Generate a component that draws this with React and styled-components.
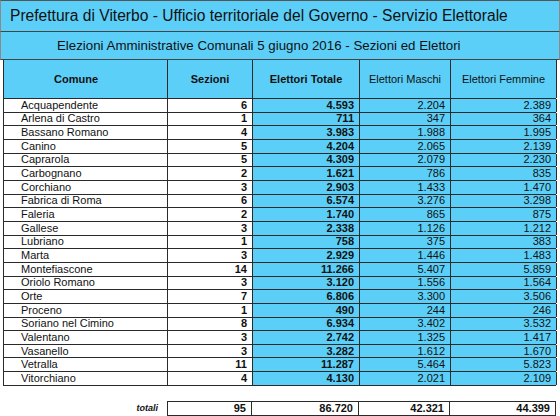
import React from 'react';
import styled, { createGlobalStyle } from 'styled-components';

const rows = [
  ['Acquapendente', '6', '4.593', '2.204', '2.389'],
  ['Arlena di Castro', '1', '711', '347', '364'],
  ['Bassano Romano', '4', '3.983', '1.988', '1.995'],
  ['Canino', '5', '4.204', '2.065', '2.139'],
  ['Caprarola', '5', '4.309', '2.079', '2.230'],
  ['Carbognano', '2', '1.621', '786', '835'],
  ['Corchiano', '3', '2.903', '1.433', '1.470'],
  ['Fabrica di Roma', '6', '6.574', '3.276', '3.298'],
  ['Faleria', '2', '1.740', '865', '875'],
  ['Gallese', '3', '2.338', '1.126', '1.212'],
  ['Lubriano', '1', '758', '375', '383'],
  ['Marta', '3', '2.929', '1.446', '1.483'],
  ['Montefiascone', '14', '11.266', '5.407', '5.859'],
  ['Oriolo Romano', '3', '3.120', '1.556', '1.564'],
  ['Orte', '7', '6.806', '3.300', '3.506'],
  ['Proceno', '1', '490', '244', '246'],
  ['Soriano nel Cimino', '8', '6.934', '3.402', '3.532'],
  ['Valentano', '3', '2.742', '1.325', '1.417'],
  ['Vasanello', '3', '3.282', '1.612', '1.670'],
  ['Vetralla', '11', '11.287', '5.464', '5.823'],
  ['Vitorchiano', '4', '4.130', '2.021', '2.109'],
];

const BLUE = '#5ccff8';
const LINE = '#2a2a2a';
const COLS = '164px 85px 107px 91px 106px';

const GlobalStyle = createGlobalStyle`
  body {
    margin: 0;
    background: #fff;
    font-family: "Liberation Sans", Arial, sans-serif;
    color: #111;
  }
`;

const Page = styled.div`
  width: 560px;
  height: 416px;
  overflow: hidden;
`;

const Band = styled.div`
  box-sizing: border-box;
  height: ${({ h }) => h}px;
  display: flex;
  align-items: center;
  padding-left: ${({ pad }) => pad}px;
  background: ${BLUE};
  border-left: 1px solid #8a8a8a;
  border-right: 1px solid #8a8a8a;
  border-top: ${({ top }) => (top ? `1px solid #555` : 'none')};
  border-bottom: 1px solid #444;
  font-size: ${({ size }) => size}px;
  white-space: nowrap;
`;

const Table = styled.div`
  margin-left: 3px;
  width: 553px;
`;

const Row = styled.div`
  box-sizing: border-box;
  display: grid;
  grid-template-columns: ${COLS};
  height: ${({ h }) => h}px;
  border-left: 1px solid ${LINE};
  border-bottom: 1px solid ${LINE};
`;

const HeadCell = styled.div`
  display: flex;
  align-items: center;
  justify-content: center;
  padding-right: ${({ shift }) => shift || 0}px;
  background: ${BLUE};
  border-right: 1px solid ${LINE};
  font-size: 11px;
  font-weight: ${({ bold }) => (bold ? 700 : 400)};
`;

const Cell = styled.div`
  display: flex;
  align-items: center;
  justify-content: ${({ left }) => (left ? 'flex-start' : 'flex-end')};
  padding: ${({ left }) => (left ? '0 0 0 17px' : '0 5px 0 0')};
  background: ${({ blue }) => (blue ? BLUE : '#fff')};
  border-right: 1px solid ${LINE};
  font-size: 11px;
  line-height: 1;
  font-weight: ${({ bold }) => (bold ? 700 : 400)};
  white-space: nowrap;
`;

const Totals = styled.div`
  box-sizing: border-box;
  margin: 15px 0 0 3px;
  display: grid;
  grid-template-columns: ${COLS};
  height: 15px;
`;

const TotLabel = styled.div`
  display: flex;
  align-items: center;
  justify-content: flex-end;
  padding-right: 9px;
  font-size: 9px;
  font-weight: 700;
  font-style: italic;
`;

const TotCell = styled.div`
  box-sizing: border-box;
  display: flex;
  align-items: center;
  justify-content: flex-end;
  padding-right: 5px;
  border: 1px solid ${LINE};
  border-left: ${({ first }) => (first ? `1px solid ${LINE}` : 'none')};
  font-size: 11px;
  font-weight: 700;
`;

export default function App() {
  return (
    <Page>
      <GlobalStyle />
      <Band h={32} pad={9} size={15.6} top>
        Prefettura di Viterbo - Ufficio territoriale del Governo - Servizio Elettorale
      </Band>
      <Band h={28} pad={56} size={13.3}>
        Elezioni Amministrative Comunali 5 giugno 2016 - Sezioni ed Elettori
      </Band>
      <Table>
        <Row h={39}>
          <HeadCell bold shift={19}>Comune</HeadCell>
          <HeadCell bold>Sezioni</HeadCell>
          <HeadCell bold>Elettori Totale</HeadCell>
          <HeadCell>Elettori Maschi</HeadCell>
          <HeadCell>Elettori Femmine</HeadCell>
        </Row>
        {rows.map(([name, sez, tot, m, f]) => (
          <Row key={name} h={13.667}>
            <Cell left>{name}</Cell>
            <Cell bold>{sez}</Cell>
            <Cell bold blue>{tot}</Cell>
            <Cell blue>{m}</Cell>
            <Cell blue>{f}</Cell>
          </Row>
        ))}
      </Table>
      <Totals>
        <TotLabel>totali</TotLabel>
        <TotCell first>95</TotCell>
        <TotCell>86.720</TotCell>
        <TotCell>42.321</TotCell>
        <TotCell>44.399</TotCell>
      </Totals>
    </Page>
  );
}
